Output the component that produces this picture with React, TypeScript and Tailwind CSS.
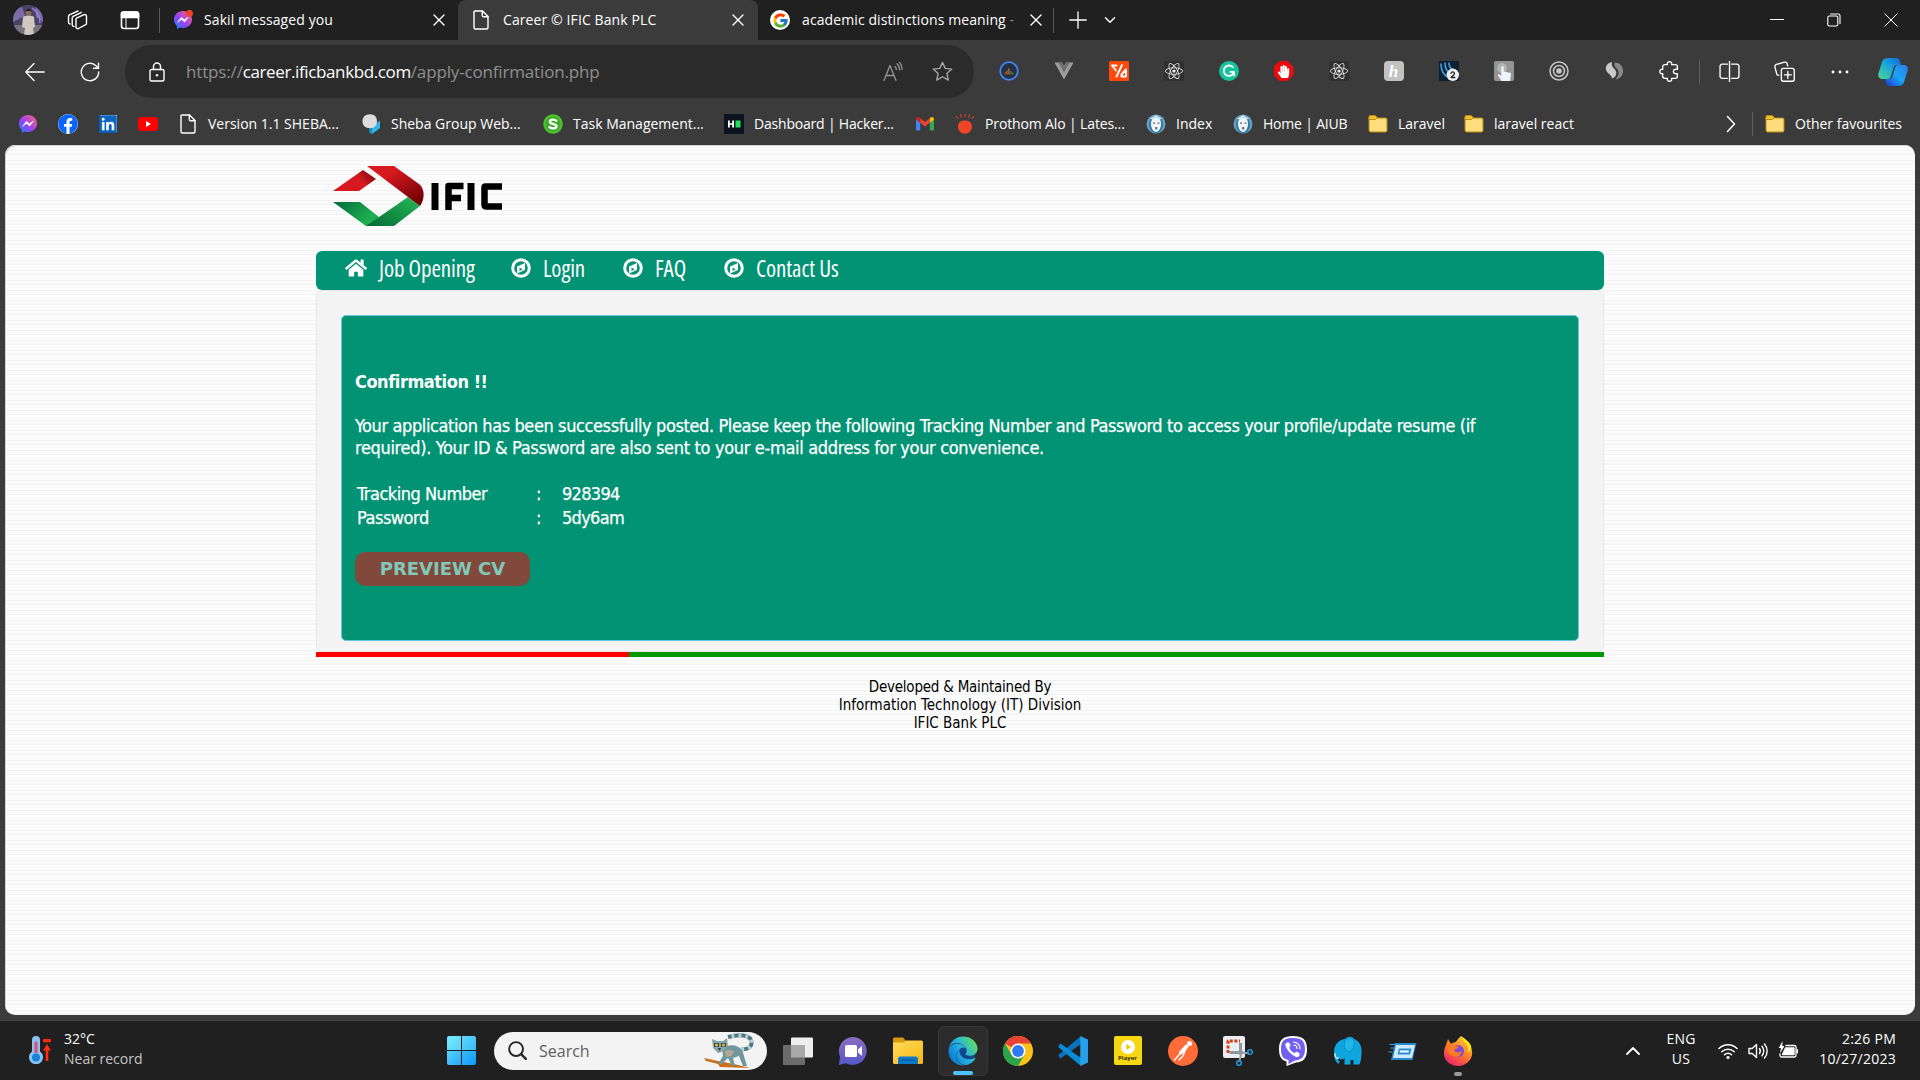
import type { ReactNode, SVGProps } from "react";
import {
  FaEdge,
  FaFacebook,
  FaHandPaper,
  FaHome,
  FaLinkedin,
  FaReact,
} from "react-icons/fa";
import { FcGoogle } from "react-icons/fc";

type IconProps = SVGProps<SVGSVGElement>;

function Svg({ children, ...rest }: IconProps) {
  return (
    <svg
      viewBox="0 0 20 20"
      fill="none"
      stroke="currentColor"
      strokeWidth={1.3}
      strokeLinecap="round"
      strokeLinejoin="round"
      className="size-5 shrink-0"
      {...rest}
    >
      {children}
    </svg>
  );
}

/* ---------- shared glyphs ---------- */

const Messenger = ({ badge }: { badge?: boolean }) => (
  <Svg stroke="none">
    <path d="M10 1C4.800 1 1 4.800 1 9.600c0 2.600 1.100 4.800 2.900 6.300V19l2.900-1.500c1 .300 2.100.400 3.200.400 5.200 0 9-3.700 9-8.400S15.200 1 10 1z" fill="url(#messenger)" />
    <path d="M4.700 12.300 8.300 7.200l3.100 2.600 4-2.800-3.700 5.100-3.100-2.500z" fill="#fff" stroke="#fff" strokeWidth={0.5} />
    {badge && <circle cx="16.500" cy="3.300" r="3.500" fill="#f04030" />}
  </Svg>
);

const PageIcon = () => (
  <Svg strokeWidth={1.4}>
    <path d="M4 1h7.500L17 6.500V17.500a1.500 1.500 0 0 1-1.500 1.500h-11A1.500 1.500 0 0 1 3 17.500V2a1 1 0 0 1 1-1z" />
    <path d="M11.300 1v4.500a1.200 1.200 0 0 0 1.200 1.200H17" />
  </Svg>
);

const Close = () => (
  <Svg viewBox="0 0 12 12" className="size-3 shrink-0" strokeWidth={1.400}>
    <path d="m1 1 10 10M11 1 1 11" />
  </Svg>
);

const Folder = () => (
  <Svg stroke="#b58a10" strokeWidth={1}>
    <path d="M1 3a1.500 1.500 0 0 1 1.500-1.500H7L9.500 4H17.500A1.500 1.500 0 0 1 19 5.500v11a1.500 1.500 0 0 1-1.500 1.500h-15A1.500 1.500 0 0 1 1 16.500z" fill="#ffdc7c" />
    <path d="M1 3a1.500 1.500 0 0 1 1.500-1.500H7L9.300 3.700 7.500 5.500H1z" fill="#f8c22c" />
  </Svg>
);

const ReactTile = () => (
  <span className="flex size-5 items-center justify-center rounded-xs bg-[#303030] text-[18px] text-[#ececec]">
    <FaReact />
  </span>
);

const Crest = () => (
  <Svg stroke="none">
    <circle cx="10" cy="10" r="9.500" fill="#6b9dbd" />
    <path d="M3 12c0-7 3-10 7-10s7 3 7 10c-1 5-4 7-7 7s-6-2-7-7z" fill="#2b7bab" />
    <path d="M10 3c-3 0-5 3-5 7 0 5 3 8 5 8s5-3 5-8c0-4-2-7-5-7z" fill="#eef5f7" />
    <path d="M7 8.500h2v1.200H7zM11.500 8.500h2v1.200h-2zM9.200 13h2v2.500h-2z" fill="#666" />
    <path d="M4 4.500 10 1l6 3.500-2 1-4-1.800-4 1.800z" fill="#c2e2ef" />
  </Svg>
);

/* ---------- title bar ---------- */

function TitleBar() {
  return (
    <header className="flex h-10 bg-[#202020] text-[14px] tracking-[0.100px]">
      <div className="flex w-[160px] items-center pl-[13px]">
        <svg viewBox="0 0 30 30" className="size-[30px]">
          <clipPath id="avatar"><circle cx="15" cy="15" r="15" /></clipPath>
          <g clipPath="url(#avatar)">
            <rect width="30" height="30" fill="#4b4364" />
            <path d="M0 4 9 2l3 9-12 6zM22 0l8 7v10l-7-5z" fill="#7b6da8" />
            <path d="M19 3c6 4 8 9 8 15" stroke="#9c7cf0" strokeWidth="1.500" fill="none" />
            <path d="M0 20h30v10H0z" fill="#77727c" />
            <path d="M10 12c2-2 9-2 11 0l1 10-2 1 1 7H11l1-7-3-1z" fill="#cfcabe" />
            <circle cx="15.500" cy="7.500" r="2.900" fill="#8b6a5c" />
            <path d="M12.500 7c0-4 6-4 6 0l-1-1h-4z" fill="#1d1820" />
          </g>
        </svg>
        <Svg viewBox="0 0 22 20" className="ml-[24px] h-5 w-[22px]" strokeWidth={1.400}>
          <path d="M9.500 8.200 17 4.700c1.200-.500 2.500.200 2.500 1.500v7c0 .800-.500 1.400-1.200 1.700l-6.800 3.600c-1 .500-2.500-.200-2.500-1.400V9c0-.300.200-.600.500-.800z" />
          <path d="M7 16.500c-1 0-1.800-.700-1.800-1.700V8c0-.700.400-1.300 1-1.600l8.300-4M3 14c-.800-.300-1.500-.900-1.500-1.800V6.500c0-.700.400-1.300 1-1.600L11 1" />
        </Svg>
        <Svg className="ml-[31px] size-5" strokeWidth={1.600}>
          <rect x="1.500" y="2" width="17" height="16.500" rx="2.500" />
          <path d="M1.500 3.500Q1.500 2 3.500 2h13q2 0 2 2v3.500h-17z" fill="currentColor" />
          <path d="M6 7v11" strokeWidth={1} />
        </Svg>
        <span className="ml-auto h-[25px] w-px bg-[#5a5a5a]" />
      </div>
      <div className="flex w-[298px] items-center pr-[13px] pl-[13px]">
        <Messenger badge />
        <span className="ml-[11px] flex-1 pb-px">Sakil messaged you</span>
        <Close />
      </div>
      <div className="flex w-[300px] items-center rounded-t-lg bg-[#3b3b3b] pr-[14px] pl-[13px]">
        <PageIcon />
        <span className="ml-[12px] flex-1 pb-px">Career © IFIC Bank PLC</span>
        <Close />
      </div>
      <div className="flex w-[298px] items-center pr-[2px] pl-[12px]">
        <span className="flex size-5 shrink-0 items-center justify-center rounded-full bg-white text-[17px]">
          <FcGoogle />
        </span>
        <span className="ml-3 flex-1 pb-px whitespace-nowrap">
          academic distinctions meaning <span className="text-[#8a8a8a]">-</span>
        </span>
        <Close />
        <span className="ml-[11px] h-[25px] w-px bg-[#5a5a5a]" />
      </div>
      <div className="flex items-center pl-[13px]">
        <Svg viewBox="0 0 18 18" className="size-[18px]" strokeWidth={1.300}><path d="M9 .800v16.400M.800 9h16.400" /></Svg>
        <Svg viewBox="0 0 12 8" className="ml-[17px] h-2 w-3" strokeWidth={1.500}><path d="m1.500 1.800 4.500 4.500 4.500-4.500" /></Svg>
      </div>
      <div className="ml-auto flex items-center gap-[43px] pr-[22px]">
        <Svg viewBox="0 0 14 14" className="size-[14px]" strokeWidth={1}><path d="M.500 6.500h13" /></Svg>
        <Svg viewBox="0 0 14 14" className="size-[14px]" strokeWidth={1.100}>
          <rect x=".800" y="3" width="10" height="10" rx="1.500" />
          <path d="M3.500 1H11a2 2 0 0 1 2 2v7.500" />
        </Svg>
        <Svg viewBox="0 0 14 14" className="size-[14px]" strokeWidth={1}><path d="m.800.800 12.400 12.400M13.200.800.800 13.200" /></Svg>
      </div>
    </header>
  );
}

/* ---------- toolbar ---------- */

const extensions: ReactNode[] = [
  <Svg key="analytics" stroke="none">
    <circle cx="10" cy="10" r="8.800" fill="#263041" stroke="#4285f4" strokeWidth={1.800} />
    <path d="M5.500 13.500V11h1.300v2.500z" fill="#c0392b" /><path d="M7.300 13.500v-4h1.300v4z" fill="#a97a20" />
    <path d="M9.200 13.500V7.500h1.300v6z" fill="#c8642c" /><path d="M11.100 13.500v-3.500h1.300v3.500z" fill="#2f8a58" /><path d="M13 13.500V11.500h1.300v2z" fill="#8a7a20" />
  </Svg>,
  <Svg key="vue" stroke="none">
    <path d="M.500 1.500H8L10 5l2-3.500h7.500L10 18.500z" fill="#9c9c9c" /><path d="M4.300 1.500H8L10 5l2-3.500h3.700L10 11.500z" fill="#6f6f6f" />
  </Svg>,
  <Svg key="orange" stroke="#fff" strokeWidth={1.900}>
    <rect width="20" height="20" rx="1.500" fill="#ff4a0c" stroke="none" />
    <path d="M7.500 4.500H3L7 9.500M13 4 7.500 15.500M12.500 15.500H17V8.500l-4.500 5z" />
  </Svg>,
  <ReactTile key="react" />,
  <Svg key="grammarly" strokeWidth={1.800} stroke="#fff">
    <circle cx="10" cy="10" r="10" fill="#15c39a" stroke="none" />
    <path d="M13.800 6.200A5.200 5.200 0 1 0 15 11h-3.500M15 11v3.500" />
  </Svg>,
  <span key="block" className="flex size-5 items-center justify-center bg-[#ee0b0b] text-[13px] text-white [clip-path:polygon(30%_0,70%_0,100%_30%,100%_70%,70%_100%,30%_100%,0_70%,0_30%)]">
    <FaHandPaper />
  </span>,
  <ReactTile key="react2" />,
  <span key="honey" className="flex size-5 items-center justify-center rounded-sm bg-[#c2c2c2] font-['Liberation_Serif'] text-[17px] leading-none font-bold text-white italic">h</span>,
  <Svg key="waves" stroke="#3d9bd8" strokeWidth={1.700}>
    <rect width="20" height="20" fill="#0d1f33" stroke="none" />
    <path d="M2 3c0 6 2 11 8 14M6 2c0 5 1 8 5 10M10 2c0 3 1 5 3 6" />
    <circle cx="13.800" cy="13.800" r="6.200" fill="#f0f0f0" stroke="none" />
    <path d="M12 12.300c.500-2 3.500-1.800 3.500.200 0 1.400-2.500 2.400-3.400 4h3.700" stroke="#222" strokeWidth={1.300} />
  </Svg>,
  <Svg key="touch" stroke="none">
    <rect width="20" height="20" rx="2" fill="#949494" /><circle cx="8" cy="7" r="5" fill="#b4b4b4" />
    <path d="M7.300 6.500c0-1.600 2.400-1.600 2.400 0v4l6 1.200c1 .200 1.300 1 1.200 2L16 20H7.500L4 14.500c-.500-1 .600-1.800 1.500-1l1.800 1.500z" fill="#eef5fb" />
  </Svg>,
  <Svg key="target" stroke="#c6c6c6" strokeWidth={1.500}>
    <circle cx="10" cy="10" r="9" /><circle cx="10" cy="10" r="5.500" /><circle cx="10" cy="10" r="2.800" fill="#c6c6c6" stroke="none" />
  </Svg>,
  <Svg key="leaf" stroke="none">
    <path d="M8 1C3 2 .500 6 2.500 10c1.800 3 5 3.500 5.500 7.500 5-2 5.500-6 2.500-9.500C8 5.500 7 3.500 8 1z" fill="#c9c9c9" />
    <path d="M11 1.500c-1.500 3 .500 4.500 2.500 7s1.500 6-2 10c6-1 8.500-6 7.300-10.500C17.800 4 15 1.700 11 1.500z" fill="#8a8a8a" />
  </Svg>,
  <Svg key="puzzle" className="ml-0.5 size-[21px] shrink-0">
    <path d="M5.500 3.500H8C7.500 1.500 8.500.700 10 .700s2.500.800 2 2.800h3.500a2 2 0 0 1 2 2V8c-2.500-.600-3.800.400-3.800 2s1.300 2.600 3.800 2v2.500a2 2 0 0 1-2 2H12c.500 2-.500 2.800-2 2.800s-2.500-.800-2-2.800H5.500a2 2 0 0 1-2-2V12C1.500 12.300.800 11.400.800 10S1.500 7.700 3.500 8V5.500a2 2 0 0 1 2-2z" />
  </Svg>,
];

function Toolbar() {
  return (
    <div className="flex h-[63px] items-center pl-[25px]">
      <Svg strokeWidth={1.300}><path d="M9 1.500.800 10 9 18.500M1 10h18.300" /></Svg>
      <Svg className="ml-[35px] size-5" strokeWidth={1.400}>
        <path d="M18.700 10A8.700 8.700 0 1 1 16 3.700L18.200 6" /><path d="M18.500 1.200v5h-5" />
      </Svg>
      <div className="ml-[25px] flex h-[53px] w-[849px] items-center rounded-full bg-[#2b2b2b] pr-[21px] pl-[22px]">
        <Svg strokeWidth={1.400}>
          <rect x="3" y="7.500" width="14" height="11.500" rx="1.800" />
          <path d="M6.500 7.500V4.500a3.500 3.500 0 0 1 7 0v3" /><circle cx="10" cy="13.200" r="1.200" fill="currentColor" stroke="none" />
        </Svg>
        <div className="ml-[19px] flex-1 text-[17px] tracking-[-0.160px] whitespace-nowrap text-[#8f8f8f]">
          https://<span className="tracking-[-0.380px] text-white">career.ificbankbd.com</span>/apply-confirmation.php
        </div>
        <Svg className="size-5 text-[#979797]">
          <path d="M1 18.500 7 3.500l6 15M3.200 13.500h7.600M12 4.500c.900.800 1.300 1.800 1.300 3M14 1.800c1.800 1.500 2.700 3.500 2.500 6M16.500.500c1.900 2 2.800 4.500 2.500 7" />
        </Svg>
        <Svg className="ml-[29px] size-[21px] text-[#a5a5a5]">
          <path d="m10 1.300 2.600 5.700 6.200.700-4.600 4.200 1.300 6.300-5.500-3.200-5.500 3.200 1.300-6.300L1.200 7.700 7.400 7z" />
        </Svg>
      </div>
      <div className="ml-[7px] flex">
        {extensions.map((icon, i) => (
          <span key={i} className="flex w-[55px] justify-center">{icon}</span>
        ))}
      </div>
      <span className="ml-[3px] h-6 w-px bg-[#5f5f5f]" />
      <Svg className="ml-[19px] size-[21px]">
        <path d="M8 3H3.200A2 2 0 0 0 1 5v9.500a2 2 0 0 0 2.200 2H8M12 3h4.800A2 2 0 0 1 19 5v9.500a2 2 0 0 1-2.200 2H12M10 .500v19" />
      </Svg>
      <Svg className="ml-[34px] size-[21px]">
        <rect x="7" y="7" width="12.300" height="12.300" rx="2" /><path d="M13.200 10v6.500M10 13.200h6.500" />
        <path d="M4.500 13.500c-1 .200-1.700-.500-1.900-1.300L.900 5.800A2 2 0 0 1 2.300 3.300L10 1.100a2 2 0 0 1 2.500 1.400l.500 2" />
      </Svg>
      <Svg className="ml-[35px] size-5" stroke="none" fill="currentColor">
        <circle cx="3" cy="10" r="1.400" /><circle cx="10" cy="10" r="1.400" /><circle cx="17" cy="10" r="1.400" />
      </Svg>
      <svg viewBox="0 0 30 28" className="ml-[28px] h-[28px] w-[30px]">
        <path d="M12 0h6c2.500 0 3.500 1 4.200 3.500L23 7h-4c-2 0-3 1-3.500 3l-2.700 8.500C12 20.500 11 21 9 21H4c-3 0-4.500-2.500-3.500-6L4 4C5 1 7 0 12 0z" fill="url(#copilotA)" />
        <path d="M18 28h-6c-2.500 0-3.500-1-4.200-3.500L7 21h4c2 0 3-1 3.500-3l2.700-8.500C18 7.500 19 7 21 7h5c3 0 4.500 2.500 3.500 6L26 24c-1 3-3 4-8 4z" fill="url(#copilotB)" />
      </svg>
    </div>
  );
}

/* ---------- favourites bar ---------- */

function Bookmark({ icon, label, className }: { icon: ReactNode; label: string; className: string }) {
  return (
    <div className={`flex shrink-0 items-center gap-[10px] whitespace-nowrap ${className}`}>
      {icon}
      <span className="pb-px">{label}</span>
    </div>
  );
}

function FavouritesBar() {
  return (
    <div className="flex h-[42px] items-center pb-px pl-[18px] text-[14px]">
      <Messenger />
      <span className="ml-5 flex size-5 items-center justify-center rounded-full bg-white text-[20px] text-[#0866ff]"><FaFacebook /></span>
      <span className="ml-5 flex size-5 items-center justify-center">
        <span className="flex size-[17px] items-center justify-center bg-white text-[20px] text-[#0a66c2]"><FaLinkedin className="shrink-0" /></span>
      </span>
      <Svg className="ml-5 size-5" stroke="none"><rect y="3" width="20" height="14" rx="3.500" fill="#f00" /><path d="M8 7v6l5-3z" fill="#fff" /></Svg>
      <Bookmark className="ml-5 w-[183px]" icon={<PageIcon />} label="Version 1.1 SHEBA..." />
      <Bookmark
        className="w-[182px]"
        icon={<Svg stroke="none"><path d="M11 13 19 6.500V14l-8 6-3-2v-4z" fill="#2cb5ee" /><path d="m8 14 3-1v7l-3-2z" fill="#1b87bd" /><path d="M9 .300c5 0 7 3.300 7 7s-2 7-7 7-7.500-3-7.500-7 2.500-7 7.500-7z" fill="#dcdcdc" /></Svg>}
        label="Sheba Group Web..."
      />
      <Bookmark
        className="w-[181px]"
        icon={
          <Svg stroke="none">
            <circle cx="10" cy="10" r="8.600" fill="#3cab2c" stroke="#4fc22f" strokeWidth={2.200} strokeDasharray="1.500 1.200" />
            <path d="M13.300 6.800c-1.400-1.600-6.400-1.900-6.400.900 0 2.600 6.600 1.600 6.600 4.500 0 2.700-5 2.800-7 .900" stroke="#fff" strokeWidth={2.400} />
          </Svg>
        }
        label="Task Management..."
      />
      <Bookmark
        className="w-[191px] tracking-[-0.200px]"
        icon={<Svg stroke="none"><rect width="20" height="20" fill="#0e141e" /><path d="M4 6.500h1.800v2.700h2.400V6.500H10v7H8.200v-2.700H5.800v2.700H4z" fill="#fff" /><rect x="11.500" y="6.500" width="5" height="7" fill="#1fe05f" /></Svg>}
        label="Dashboard | Hacker..."
      />
      <Svg stroke="none">
        <path d="M1 5v11.500h4.200V8.800z" fill="#4285f4" /><path d="M19 5v11.500h-4.200V8.800z" fill="#34a853" />
        <path d="M5.200 8.800V4.300L10 8l4.800-3.700v4.500L10 12.500z" fill="#ea4335" /><path d="M1 5c0-2 2.300-2.600 3.600-1.500l.600.800v4.500L1 5.800z" fill="#c5221f" /><path d="M19 5c0-2-2.300-2.600-3.600-1.500l-.600.800v4.500L19 5.800z" fill="#fbbc04" />
      </Svg>
      <Bookmark
        className="ml-5 w-[191px] tracking-[-0.130px]"
        icon={<Svg stroke="#e8402a" strokeWidth={1}><path d="M10 6.500c5 0 7 3 7 6.200s-2.500 7-7 7-7-3.500-7-7 2-6.200 7-6.200z" fill="#f04427" stroke="none" /><path d="M1 2.500 3.500 4.500M5.500.500l1 3M10 0v3M14.500.500l-1 3M19 2.500l-2.500 2" /></Svg>}
        label="Prothom Alo | Lates..."
      />
      <Bookmark className="w-[87px]" icon={<Crest />} label="Index" />
      <Bookmark className="w-[135px] tracking-[-0.200px]" icon={<Crest />} label="Home | AIUB" />
      <Bookmark className="w-[96px]" icon={<Folder />} label="Laravel" />
      <Bookmark className="w-[130px]" icon={<Folder />} label="laravel react" />
      <Svg viewBox="0 0 12 20" className="mr-[15px] ml-auto h-5 w-3" strokeWidth={1.500}><path d="m2.500 2.500 7 7.500-7 7.500" /></Svg>
      <span className="mr-[12px] h-6 w-px bg-[#5f5f5f]" />
      <Bookmark className="w-[155px]" icon={<Folder />} label="Other favourites" />
    </div>
  );
}

/* ---------- web page ---------- */

const Compass = () => (
  <svg viewBox="0 0 20 20" className="size-5">
    <circle cx="10" cy="10" r="8.300" fill="none" stroke="#fff" strokeWidth="3" />
    <path fillRule="evenodd" d="M6 8.500 14 5v7L6 15.500zm2.500 1.200v3.200l3.300-1.700z" fill="#fff" />
  </svg>
);

function NavItem({ icon, label, className }: { icon: ReactNode; label: string; className: string }) {
  return (
    <a className={`flex items-center gap-3 ${className}`}>
      {icon}
      <span>{label}</span>
    </a>
  );
}

function BankLogo() {
  return (
    <svg viewBox="0 0 172 62" className="h-[62px] w-[172px]">
      <defs>
        <linearGradient id="redA" x1="0" x2="1" y1="0.500" y2="0"><stop offset="0.500" stopColor="#d71a20" /><stop offset="1" stopColor="#6a0205" /></linearGradient>
        <linearGradient id="redB" x1="0.200" x2="1" y1="0" y2="1"><stop offset="0.200" stopColor="#d71a20" /><stop offset="0.900" stopColor="#6f0003" /></linearGradient>
        <linearGradient id="greenA" x1="0" x2="1" y1="0" y2="0.500"><stop offset="0.100" stopColor="#04713a" /><stop offset="0.900" stopColor="#1faf50" /></linearGradient>
        <linearGradient id="greenB" x1="0" x2="1" y1="1" y2="0"><stop offset="0" stopColor="#046a34" /><stop offset="0.900" stopColor="#22b255" /></linearGradient>
      </defs>
      <path d="M1 26 31 5l13 9L27 26z" fill="url(#redA)" />
      <path d="M1 37h27l19 15-11 9h-2z" fill="url(#greenA)" />
      <path d="M34 61 76 32l12 9-26 20z" fill="url(#greenB)" />
      <path d="M35 1h27l25 18c6 5 6 15 1 22L76 32z" fill="url(#redB)" />
      <g fill="none" stroke="#000" strokeWidth="7" strokeLinejoin="round">
        <path d="M103 18v27M139 18v27" />
        <path d="M131.500 21h-15v24M116 33h13" strokeWidth="6.500" />
        <path d="M170 21.500h-16.500q-1 0-1 1v17q0 2 2 2h15.500" strokeWidth="6.500" />
      </g>
    </svg>
  );
}

function WebPage() {
  return (
    <main className="mx-[5px] h-[870px] overflow-hidden rounded-[10px] bg-[repeating-linear-gradient(180deg,#fdfdfd_0px,#fdfdfd_2px,#f9f9f9_2px,#f9f9f9_3px,#fdfdfd_3px,#fdfdfd_5px,#f2f2f2_5px,#f2f2f2_6px,#fdfdfd_6px,#fdfdfd_7px,#f9f9f9_7px,#f9f9f9_9px,#f3f3f3_9px,#f3f3f3_10px)] shadow-[inset_1px_1px_0_#d4d4d4]">
      <div className="mx-auto w-[1288px] pt-[20px]">
        <div className="h-[86px] pl-[16px]"><BankLogo /></div>
        <nav className="h-[39px] rounded-md bg-[#029274] text-[23px] leading-[34px] tracking-[-0.100px] text-white [font-stretch:75%]">
          <div className="flex h-[34px] pl-[29px]">
            <NavItem className="w-[166px]" icon={<FaHome className="size-[22px]" />} label="Job Opening" />
            <NavItem className="w-[112px]" icon={<Compass />} label="Login" />
            <NavItem className="w-[101px]" icon={<Compass />} label="FAQ" />
            <NavItem className="w-[130px]" icon={<Compass />} label="Contact Us" />
          </div>
        </nav>
        <section className="h-[362px] rounded-md border border-[#e6e6e6] bg-[#f4f4f4] px-6 pt-6 font-['DejaVu_Sans_Condensed'] text-[18px] leading-[22px] text-white">
          <div className="h-[326px] rounded-[5px] border border-[#6cc5dc] bg-[#029274] px-[13px] pt-[55px]">
            <h1 className="font-bold tracking-[-0.450px]">Confirmation !!</h1>
            <p className="mt-[22px] tracking-[-0.393px] whitespace-nowrap [-webkit-text-stroke:0.25px_#fff]">
              Your application has been successfully posted. Please keep the following Tracking Number and Password to access your profile/update resume (if
              <br />
              <span className="tracking-[-0.330px]">required). Your ID &amp; Password are also sent to your e-mail address for your convenience.</span>
            </p>
            <div className="mt-[23px] grid grid-cols-[179px_26px_200px] pl-[2px] leading-6 tracking-[-0.480px] [-webkit-text-stroke:0.25px_#fff]">
              <span>Tracking Number</span><span>:</span><span className="tracking-[-0.700px]">928394</span>
              <span>Password</span><span>:</span><span className="tracking-[-0.700px]">5dy6am</span>
            </div>
            <button className="mt-[22px] h-[34px] w-[175px] rounded-[10px] bg-[#81493c] font-['DejaVu_Sans'] font-bold text-[#80c8ba]">PREVIEW CV</button>
          </div>
        </section>
        <div className="flex h-[5px]">
          <span className="w-[313px] bg-[#ff0000]" />
          <span className="flex-1 bg-[#009900]" />
        </div>
        <footer className="pt-[21px] text-center font-['DejaVu_Sans_Condensed'] text-[15px] leading-[18px] text-black">
          <span className="tracking-[-0.220px]">Developed &amp; Maintained By</span>
          <br />
          Information Technology (IT) Division
          <br />
          IFIC Bank PLC
        </footer>
      </div>
    </main>
  );
}

/* ---------- taskbar ---------- */

const Lemur = () => (
  <svg viewBox="0 0 50 36" className="h-9 w-[50px]" fill="none">
    <path d="M37 16c8 1 12-3 10-9-2-5-11-6-23-3" stroke="#4d7880" strokeWidth="4" />
    <path d="M37 16c8 1 12-3 10-9-2-5-11-6-23-3" stroke="#b8d0d2" strokeWidth="4" strokeDasharray="3 4" />
    <path d="M0 25l14 3 16 3 16 4-30-1-2-3L2 28z" fill="#c96f1c" />
    <path d="M18 15c6-4 16-4 20 2 2 5 3 10 5 16h-4l-4-10-6 2 2 8h-3l-4-8-6 6h-4l5-8z" fill="#6f979c" />
    <path d="M21 18c4-2 8-1 9 1l-3 4-5 1z" fill="#b5a995" />
    <path d="M8 6l5 2h6l4-3 1 8-4 5-6 2-5-5z" fill="#83a7aa" />
    <path d="M10 10h5v4h-5zM17 10h5v4h-5z" fill="#304a50" />
    <circle cx="12.500" cy="12" r="1.600" fill="#f3b41b" /><circle cx="19.500" cy="12" r="1.600" fill="#f3b41b" />
    <path d="m14 15 3 0-1.500 3z" fill="#26383c" />
  </svg>
);

const big = { viewBox: "0 0 30 30", className: "size-[30px]", stroke: "none" } as const;

const taskIcons: ReactNode[] = [
  <Svg key="taskview" {...big}><rect x="8" y="1.500" width="22" height="20" rx="1" fill="#eeeeee" /><rect x="0" y="9" width="22" height="20" rx="1" fill="#6c6c6c" /><rect x="8" y="9" width="14" height="12.500" fill="#a9a9a9" /></Svg>,
  <Svg key="chat" {...big}><path d="M15 1a14 14 0 1 1-7 26.300L1 29l1-8.500A14 14 0 0 1 15 1z" fill="url(#chat)" /><rect x="7" y="9" width="12" height="12" rx="1.500" fill="#fff" /><path d="m20 13.500 4-3.500v10l-4-3.500z" fill="#fff" /></Svg>,
  <Svg key="files" {...big}><path d="M0 3a1.500 1.500 0 0 1 1.500-1.500H10L13 5v5H0z" fill="#d99a06" /><path d="M0 6.500h11l2-2h15.500A1.500 1.500 0 0 1 30 6v20.500a1.500 1.500 0 0 1-1.500 1.500h-27A1.500 1.500 0 0 1 0 26.500z" fill="url(#folder)" /><path d="M5 28v-5a2.500 2.500 0 0 1 2.500-2.500h15A2.500 2.500 0 0 1 25 23v5z" fill="#0f78c8" /><path d="M8.500 24h13" stroke="#08528f" strokeWidth={1.200} /></Svg>,
  <span key="edge" className="relative flex size-[50px] items-center justify-center rounded-md border border-[#373737] bg-[#2c2c2c]">
    <span className="size-[30px] rounded-full bg-[radial-gradient(circle_at_58%_62%,#0c3f86_0,#12509c_36%,transparent_38%)]"><FaEdge className="size-[30px]" fill="url(#edge)" /></span>
    <span className="absolute bottom-0 h-1 w-5 rounded-full bg-[#4cc2ff]" />
  </span>,
  <Svg key="chrome" {...big}>
    <circle cx="15" cy="15" r="15" fill="#fbc116" />
    <path d="M15 15 2 7.500A15 15 0 0 1 28 7.500H15z" fill="#ea4335" />
    <path d="M2 7.500A15 15 0 0 0 15 30l6.500-11.200L15 15 8.500 18.700z" fill="#2ba24c" />
    <circle cx="15" cy="15" r="7.500" fill="#fff" /><circle cx="15" cy="15" r="5.900" fill="#2f7af0" />
  </Svg>,
  <Svg key="code" {...big}>
    <path d="M.500 20 2.500 22.500 23 8V0L.800 18.500z" fill="#0a72b8" /><path d="M.500 10 2.500 7.500 23 22v8L.800 11.500z" fill="#0a8bd8" />
    <path d="M22.300 0 30 3.500v23L22.300 30z" fill="#27a0ec" />
  </Svg>,
  <span key="player" className="flex h-[29px] w-[28px] flex-col items-center rounded-xs bg-[#f7d713] pt-1">
    <svg viewBox="0 0 14 14" className="size-[14px]"><circle cx="7" cy="7" r="7" fill="#fff" /><path d="M5.300 4v6L10 7z" fill="#f0c808" /></svg>
    <span className="text-[6px] leading-[9px] font-bold text-[#332b00]">Player</span>
  </span>,
  <Svg key="postman" {...big}>
    <circle cx="15" cy="15" r="15" fill="#ff6c37" /><circle cx="21.500" cy="7.500" r="2.500" fill="#fff" />
    <path d="M18.500 10.500 13 16.500" stroke="#fff" strokeWidth={4} /><path d="M13 16.500 6.500 24M18 12l-3 8-4 4" stroke="#fff" strokeWidth={1.400} />
  </Svg>,
  <Svg key="snip" {...big}>
    <rect x="0" y="0" width="22" height="22" rx="2" fill="#eceff2" /><path d="M5 17V5h12" stroke="#d2400f" strokeWidth={3} strokeDasharray="3 1.600" strokeLinecap="butt" />
    <path d="M17.500 7v12M6.500 16.500h14" stroke="#8f979d" strokeWidth={3} strokeLinecap="butt" />
    <path d="m18 19-1.500 5.500M20 17h5" stroke="#9aa2a8" strokeWidth={2} /><circle cx="16" cy="27" r="2.300" stroke="#2096dc" strokeWidth={1.600} /><circle cx="27" cy="16" r="2.300" stroke="#2096dc" strokeWidth={1.600} />
  </Svg>,
  <Svg key="viber" {...big}><path d="M15 0c9 0 14 3 14 13s-4 13-11 13.500L8.500 30v-4.500C3 24 1 20 1 13 1 3 6 0 15 0z" fill="#fff" /><path d="M15 2c8.500 0 12 3 12 11s-3.500 11-10 11.500L10.500 28v-4C5 23 3 20 3 13 3 4.500 6.500 2 15 2z" fill="#7360f2" /><path d="M9 6.500c1.500-1 3 1 3.500 2.500s-1.500 1.500-1 3c.800 2.500 2.500 4 4.500 4.800 1.500.500 1.500-1.500 3-1 1.500.800 3.500 2 2.500 3.700s-2.500 2-4 1.200C13 18.500 9.500 15 7.500 10c-.700-1.500.300-2.800 1.500-3.500z" fill="#fff" /><path d="M15.500 6c4 .500 6.500 3 6.500 7M16 9c2 .200 3 1.500 3 3.500" stroke="#fff" strokeWidth={1.100} /></Svg>,
  <Svg key="elephant" {...big}>
    <path d="M12 3c3-3.500 8-2.500 9 0 6 2 8 8 7.500 14 0 5-1 9-2 11.500h-6V24h-3v4.500h-6V22c-1.500 2-5 2-6-1-1 2 0 4 1.500 4.500L5.500 28C2.500 26 .800 22 1 17 1 9 5 4 12 3z" fill="#0fa6de" />
    <path d="M12 4c3-3 8-2 9 1 1 4-1 9-5 11-4-1-6-6-4-12z" fill="#1fb6ea" stroke="#0c86bc" strokeWidth={0.800} /><path d="M2 18c0 3.500 2 5 3.800 4" stroke="#e9f7fc" strokeWidth={1.300} />
  </Svg>,
  <Svg key="run" {...big}><path d="M7 7h21.500l-4 17H3z" fill="#2489cd" /><path d="M8 9h19l-3 13H5z" fill="#cfeafa" /><path d="M11 12.500h12.500l-1.500 6H9.500z" fill="#2a8fd2" /><path d="M12 14.500h9l-.500 2h-9z" fill="#fff" /><path d="M2 8.500h6M3 12h3M1 16h3" stroke="#38a4e4" strokeWidth={1.200} /></Svg>,
  <span key="firefox" className="relative flex size-[50px] items-center justify-center">
    <Svg {...big}>
      <path d="M3 9 5 3l3 5c1-1 3-2 5-2 1-2 3-4 5-6 0 3 1 4 3 5.500l1-1.500c5 4 8 9 7 15-1 6-7 11-14 11S1 25 1 18c0-4 .500-6 2-9z" fill="url(#fox)" />
      <path d="M18 0c0 3 1 4 3 5.500 4 3 5 7 3.500 11 3-1 4-3 3.700-6C27.500 7 24 4 18 0z" fill="#ffe226" />
      <circle cx="15" cy="15" r="6" fill="#7f49d8" /><path d="M5 8c2 0 4 .500 6 2 2 .500 4 0 5 1-1 2-4 1.500-5 3 1 3 5 3 8 1-1 5-5 7-9 5-4-1-6-6-5-12z" fill="#ff7b22" />
    </Svg>
    <span className="absolute bottom-0 h-1 w-2 rounded-full bg-[#9a9a9a]" />
  </span>,
];

function Taskbar() {
  return (
    <footer className="flex h-[60px] items-center border-t border-[#454545] bg-[#202020] text-[14px] leading-5">
      <div className="flex w-[447px] items-center pb-px pl-[29px]">
        <svg viewBox="0 0 22 28" className="h-7 w-[22px]">
          <path d="M3 4a4 4 0 0 1 8 0v11.500a7 7 0 1 1-8 0z" fill="#8ac3f2" /><path d="M5.300 7a1.700 1.700 0 0 1 3.400 0v10H5.300z" fill="#d5587c" /><circle cx="7" cy="21.500" r="4" fill="#1683d8" />
          <rect x="14" y="3" width="8" height="3.200" rx="1" fill="#ff2a12" /><path d="m18 8 4 6.500h-2.700V25h-2.600V14.500H14z" fill="#ff2a12" />
        </svg>
        <div className="ml-[13px] pb-[3px]">
          <div>32°C</div>
          <div className="text-[#c4c4c4]">Near record</div>
        </div>
      </div>
      <div className="grid h-[29px] w-[29px] grid-cols-2 gap-px">
        <span className="rounded-tl-xs bg-linear-to-br from-[#7cecff] to-[#52d0fb]" />
        <span className="rounded-tr-xs bg-linear-to-br from-[#60dafd] to-[#36b9f8]" />
        <span className="rounded-bl-xs bg-linear-to-br from-[#56d3fc] to-[#26a8f6]" />
        <span className="rounded-br-xs bg-linear-to-br from-[#38bbf8] to-[#0898fb]" />
      </div>
      <div className="ml-[18px] flex h-[38px] w-[273px] items-center rounded-full bg-[#f3f3f3] pr-[13px] pl-[14px]">
        <Svg className="size-[19px] text-[#262626]" strokeWidth={2}><circle cx="8.500" cy="8.500" r="7.300" /><path d="m13.800 13.800 5 5" strokeWidth={2.400} /></Svg>
        <span className="ml-[12px] flex-1 text-[16px] text-[#5f5f5f]">Search</span>
        <Lemur />
      </div>
      <div className="ml-[3px] flex">
        {taskIcons.map((icon, i) => (
          <span key={i} className="flex w-[55px] items-center justify-center">{icon}</span>
        ))}
      </div>
      <div className="ml-auto flex items-center pr-[24px]">
        <Svg viewBox="0 0 14 8" className="mr-[26px] h-2 w-[14px]" strokeWidth={1.800}><path d="m1 7 6-6 6 6" /></Svg>
        <div className="w-[30px] pb-[3px] text-center tracking-[0.200px]">ENG<br />US</div>
        <Svg className="ml-[22px] size-5" strokeWidth={1.500}>
          <path d="M1 7.500a12.700 12.700 0 0 1 18 0M3.800 10.800a8.700 8.700 0 0 1 12.400 0M6.500 13.800a5 5 0 0 1 7 0" /><circle cx="10" cy="16.500" r="1.600" fill="currentColor" stroke="none" />
        </Svg>
        <Svg className="ml-[10px] size-5" strokeWidth={1.400}>
          <path d="M1 7.500h3.200L8.500 3.500v13L4.200 12.500H1zM11.500 7.500c1 1.500 1 3.500 0 5M14 5.300c2.300 2.600 2.300 6.800 0 9.400M16.500 3c3.500 4 3.500 10 0 14" />
        </Svg>
        <Svg className="ml-[10px] size-5" strokeWidth={1.300}>
          <path d="M8 4.500h8.500A1.500 1.500 0 0 1 18 6v8.500a1.500 1.500 0 0 1-1.500 1.500h-13A1.500 1.500 0 0 1 2 14.500V13" /><path d="M7.500 7H16v6.500H4.500z" fill="currentColor" /><path d="M19.300 8.800v2.800" strokeWidth={1.600} />
          <path d="M4.500 0 .800 7H3L2 12.500 6.500 5H4.300z" fill="currentColor" stroke="none" />
        </Svg>
        <div className="ml-5 w-[78px] pb-[3px] text-right tracking-[0.250px]">2:26 PM<br />10/27/2023</div>
      </div>
    </footer>
  );
}

function Gradients() {
  return (
    <svg className="absolute size-0" aria-hidden="true">
      <defs>
        <linearGradient id="messenger" x1="0" x2="1" y1="1" y2="0"><stop offset="0" stopColor="#0a8cff" /><stop offset="0.450" stopColor="#9a40f6" /><stop offset="1" stopColor="#ff6a66" /></linearGradient>
        <linearGradient id="copilotA" x1="1" x2="0" y1="0" y2="1"><stop offset="0" stopColor="#1461d8" /><stop offset="0.450" stopColor="#17a6dc" /><stop offset="1" stopColor="#4fd890" /></linearGradient>
        <linearGradient id="copilotB" x1="1" x2="0" y1="0" y2="1"><stop offset="0" stopColor="#2b7ce8" /><stop offset="0.500" stopColor="#1ba5f8" /><stop offset="1" stopColor="#1a35d0" /></linearGradient>
        <linearGradient id="chat" x1="0" x2="0" y1="0" y2="1"><stop offset="0" stopColor="#8a6fc0" /><stop offset="1" stopColor="#5557c8" /></linearGradient>
        <linearGradient id="folder" x1="0" x2="1" y1="0" y2="1"><stop offset="0" stopColor="#ffdc5c" /><stop offset="1" stopColor="#f9b714" /></linearGradient>
        <linearGradient id="edge" x1="0" x2="1" y1="0.800" y2="0.200"><stop offset="0" stopColor="#0b6fcf" /><stop offset="0.500" stopColor="#24b4e4" /><stop offset="1" stopColor="#66e254" /></linearGradient>
        <linearGradient id="fox" x1="0.900" x2="0.300" y1="0" y2="1"><stop offset="0" stopColor="#ffe02c" /><stop offset="0.500" stopColor="#ff8326" /><stop offset="1" stopColor="#f0246a" /></linearGradient>
      </defs>
    </svg>
  );
}

export default function App() {
  return (
    <div className="h-[1080px] w-[1920px] overflow-hidden bg-[#3b3b3b] font-['Open_Sans',sans-serif] text-white">
      <Gradients />
      <TitleBar />
      <Toolbar />
      <FavouritesBar />
      <WebPage />
      <div className="h-[5px]" />
      <Taskbar />
    </div>
  );
}
